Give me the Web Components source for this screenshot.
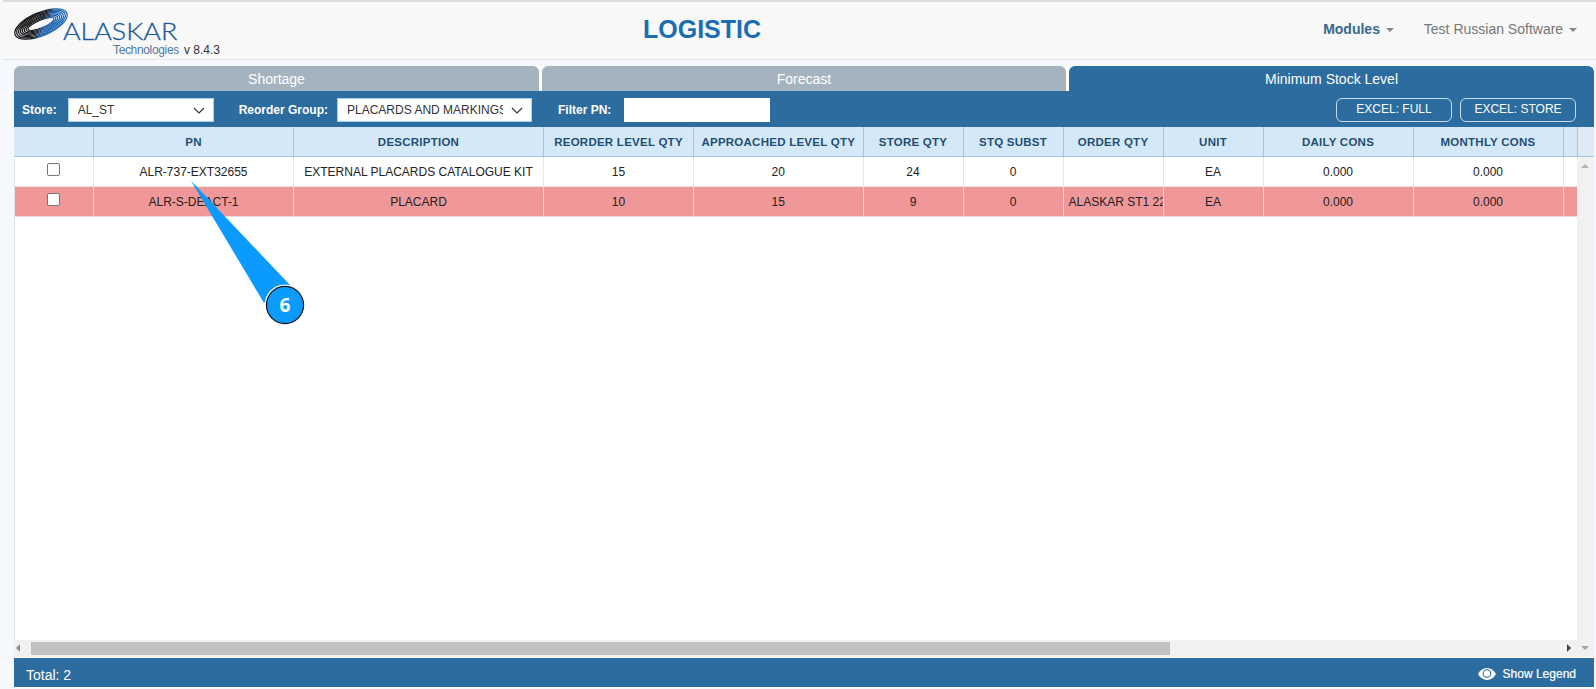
<!DOCTYPE html>
<html>
<head>
<meta charset="utf-8">
<title>Logistic</title>
<style>
  html, body { margin: 0; height: 689px; overflow: hidden; }
  body {
    background: #f5f9fe;
    font: 12px "Liberation Sans", Arial, sans-serif;
    display: flex;
    flex-direction: column;
    --cols: 80px 200px 250px 150px 169.5px 100px 100px 100px 100px 150px 150px 14px 16px;
  }
</style>
</head>
<body>
<top-nav></top-nav>
<stock-page>
  <tab-strip></tab-strip>
  <stock-toolbar></stock-toolbar>
  <stock-grid></stock-grid>
  <grid-footer></grid-footer>
</stock-page>
<callout-pin>6</callout-pin>

<script>
class AlaskarLogo extends HTMLElement {
  constructor() {
    super();
    this.attachShadow({ mode: 'open' });
    const rings = [0, 1, 2, 3, 4, 5, 6, 7].map((i) => {
      return `<ellipse cx="28" cy="17" rx="${28 - i * 2}" ry="${11.5 - i * 1.1}" transform="rotate(-23 28 17)"/>`;
    }).join('');
    this.shadowRoot.innerHTML = `
      <style>
        :host { display: block; position: relative; width: 225px; height: 57px; }
        svg { position: absolute; left: 13px; top: 5px; }
        .name {
          position: absolute; left: 63px; top: 17px;
          font: 300 24px/24px Lato, "Open Sans", sans-serif;
          color: #1a5a9c; transform: scaleX(1.12); transform-origin: left center;
          -webkit-text-stroke: 0.3px #1a5a9c;
        }
        .sub { position: absolute; left: 113px; top: 41px; font: 12px/14px "Liberation Sans", sans-serif; color: #4f7aa8; letter-spacing: -0.35px; }
        .ver { position: absolute; left: 184px; top: 41px; font: 12px/14px "Liberation Sans", sans-serif; color: #333; }
      </style>
      <svg width="60" height="40" viewBox="0 0 60 40">
        <defs>
          <linearGradient id="g" gradientUnits="userSpaceOnUse" x1="17" y1="5" x2="37" y2="29">
            <stop offset="0" stop-color="#0c0c0c"/>
            <stop offset="0.5" stop-color="#1a1e24"/>
            <stop offset="0.68" stop-color="#1c5da6"/>
            <stop offset="1" stop-color="#1863b4"/>
          </linearGradient>
        </defs>
        <g fill="none" stroke="url(#g)" stroke-width="1.2">
          ${rings}
        </g>
      </svg>
      <span class="name">ALASKAR</span>
      <span class="sub">Technologies</span>
      <span class="ver">v 8.4.3</span>
    `;
  }
}
customElements.define('alaskar-logo', AlaskarLogo);

class TopNav extends HTMLElement {
  constructor() {
    super();
    this.attachShadow({ mode: 'open' });
    this.shadowRoot.innerHTML = `
      <style>
        :host {
          display: flex; align-items: flex-start; flex: none;
          box-sizing: border-box; height: 60px; margin-left: 3px;
          background: #f8f8f8; border-bottom: 1px solid #e7e7e7;
          border-top: 2px solid #dcdcdc; margin-bottom: 6px;
        }
        alaskar-logo { margin-left: -3px; flex: none; }
        .title {
          flex: none; margin-left: 418px;
          font: bold 25px/54px "Liberation Sans", sans-serif; color: #1b6db3;
        }
        .menu { margin-left: auto; display: flex; padding-top: 17px; font-size: 14px; line-height: 20px; }
        .item { color: #777; padding-right: 30px; white-space: nowrap; }
        .item:last-child { padding-right: 19px; }
        .item.on { color: #34688f; font-weight: bold; }
        .caret {
          display: inline-block; width: 0; height: 0; margin-left: 2px; vertical-align: middle;
          border-top: 4px solid #888; border-left: 4px solid transparent; border-right: 4px solid transparent;
        }
      </style>
      <alaskar-logo></alaskar-logo>
      <div class="title">LOGISTIC</div>
      <div class="menu">
        <span class="item on">Modules <i class="caret"></i></span>
        <span class="item">Test Russian Software <i class="caret"></i></span>
      </div>
    `;
  }
}
customElements.define('top-nav', TopNav);

class StockPage extends HTMLElement {
  constructor() {
    super();
    this.attachShadow({ mode: 'open' });
    this.shadowRoot.innerHTML = `
      <style>
        :host {
          display: flex; flex-direction: column; flex: none;
          height: 621px; margin: 0 2px 0 14px; background: #fff;
        }
      </style>
      <slot></slot>
    `;
  }
}
customElements.define('stock-page', StockPage);

class TabStrip extends HTMLElement {
  constructor() {
    super();
    this.attachShadow({ mode: 'open' });
    const tabs = ['Shortage', 'Forecast', 'Minimum Stock Level'];
    this.shadowRoot.innerHTML = `
      <style>
        :host { display: grid; grid-template-columns: 525px 524px 1fr; column-gap: 3px; flex: none; height: 25px; background: #fff; }
        div {
          background: #a4b3be; color: #fff; text-align: center;
          font-size: 14px; line-height: 26px; border-radius: 6px 6px 0 0;
        }
        div.on { background: #2d6c9e; }
      </style>
      ${tabs.map((t, i) => `<div class="${i === 2 ? 'on' : ''}">${t}</div>`).join('')}
    `;
  }
}
customElements.define('tab-strip', TabStrip);

class StockToolbar extends HTMLElement {
  constructor() {
    super();
    this.attachShadow({ mode: 'open' });
    const chevron = '<svg width="12" height="7" viewBox="0 0 12 7"><path d="M1 1l5 5 5-5" fill="none" stroke="#333" stroke-width="1.2"/></svg>';
    this.shadowRoot.innerHTML = `
      <style>
        :host {
          display: flex; align-items: center; flex: none;
          height: 36px; box-sizing: border-box; background: #2d6c9e;
          color: #fff; padding: 2px 18px 0 8px;
          font-weight: bold;
        }
        label { white-space: nowrap; }
        .sel {
          display: flex; align-items: center; box-sizing: border-box; height: 24px;
          background: #fff; border: 1px solid #a9d0ee; color: #333; font-weight: normal;
          padding: 0 8px 0 9px;
        }
        .sel span { flex: 1; overflow: hidden; white-space: nowrap; }
        .sel svg { flex: none; margin-left: 8px; }
        .store { width: 146px; margin-left: 11px; }
        .group { width: 195px; margin-left: 9px; }
        .l2 { margin-left: 25px; }
        .l3 { margin-left: 26px; }
        .filter { width: 146px; height: 24px; margin-left: 13px; background: #fff; }
        .btns { margin-left: auto; display: flex; gap: 8px; }
        .btn {
          box-sizing: border-box; width: 116px; height: 24px; border: 1px solid #c5dced; border-radius: 6px;
          text-align: center; line-height: 21px; font-weight: normal; font-size: 12px;
        }
      </style>
      <label>Store:</label>
      <div class="sel store"><span>AL_ST</span>${chevron}</div>
      <label class="l2">Reorder Group:</label>
      <div class="sel group"><span>PLACARDS AND MARKINGS</span>${chevron}</div>
      <label class="l3">Filter PN:</label>
      <div class="filter"></div>
      <div class="btns">
        <div class="btn">EXCEL: FULL</div>
        <div class="btn">EXCEL: STORE</div>
      </div>
    `;
  }
}
customElements.define('stock-toolbar', StockToolbar);

class StockGrid extends HTMLElement {
  constructor() {
    super();
    this.attachShadow({ mode: 'open' });
    const heads = ['', 'PN', 'DESCRIPTION', 'REORDER LEVEL QTY', 'APPROACHED LEVEL QTY', 'STORE QTY', 'STQ SUBST', 'ORDER QTY', 'UNIT', 'DAILY CONS', 'MONTHLY CONS', '', ''];
    const rows = [
      { cls: '', cells: ['ALR-737-EXT32655', 'EXTERNAL PLACARDS CATALOGUE KIT', '15', '20', '24', '0', '', 'EA', '0.000', '0.000'] },
      { cls: 'low', cells: ['ALR-S-DEACT-1', 'PLACARD', '10', '15', '9', '0', 'ALASKAR ST1 22', 'EA', '0.000', '0.000'] }
    ];
    const rowHtml = rows.map((r) => `
      <div class="row ${r.cls}">
        <div class="c"><i class="check"></i></div>
        ${r.cells.map((c, i) => `<div class="c ${i === 6 ? 'clip' : ''}">${c}</div>`).join('')}
        <div class="c"></div>
      </div>`).join('');
    this.shadowRoot.innerHTML = `
      <style>
        :host { display: flex; flex-direction: column; flex: 1; min-height: 0; position: relative; border-left: 1px solid #dfe6ec; }
        .head, .row { display: grid; grid-template-columns: var(--cols); margin-left: -1px; }
        .head {
          flex: none; height: 30px; box-sizing: border-box; background: #d5e8f8;
          border-bottom: 1px solid #a9c5dd; color: #1f4f73; font-weight: bold;
          font-size: 11.5px; letter-spacing: 0.25px;
        }
        .head div { border-right: 1px solid #a9c5dd; text-align: center; line-height: 30px; white-space: nowrap; overflow: hidden; }
        .head div:last-child { border-right: 0; background: #dde9f3; }
        .body { flex: 1; min-height: 0; display: flex; }
        .rows { flex: 1; min-width: 0; overflow: hidden; }
        .row { height: 30px; box-sizing: border-box; border-bottom: 1px solid #e6e6e6; color: #222; }
        .row .c { border-right: 1px solid #e6e6e6; text-align: center; line-height: 30px; white-space: nowrap; overflow: hidden; }
        .row .c:last-child { border-right: 0; }
        .row .clip { text-align: left; padding-left: 5px; }
        .row.low { background: #ef9799; border-bottom-color: #f1d9da; }
        .row.low .c { border-right-color: #f8dcdc; }
        .check {
          display: block; box-sizing: border-box; width: 13px; height: 13px; margin: 6px 0 0 33px;
          background: #fff; border: 1px solid #767676; border-radius: 2px;
        }
        .vbar { flex: none; width: 17px; background: #f1f1f1; position: relative; }
        .up { position: absolute; left: 4px; top: 7px; border: 4px solid transparent; border-top: 0; border-bottom: 4px solid #b4b4b4; }
        .hbar { flex: none; height: 17px; background: #f1f1f1; position: relative; margin-left: -1px; margin-bottom: 1px; }
        .thumb { position: absolute; left: 17px; top: 2px; width: 1139px; height: 13px; background: #c1c1c1; }
        .tri { position: absolute; width: 0; height: 0; border: 4px solid transparent; }
        .left { left: 2px; top: 4px; border-left: 0; border-right-color: #8f8f8f; }
        .right { right: 23px; top: 4px; border-right: 0; border-left-color: #444; }
        .down { right: 5px; top: 6px; border-bottom: 0; border-top-color: #a5a5a5; }
      </style>
      <div class="head">${heads.map((h) => `<div>${h}</div>`).join('')}</div>
      <div class="body">
        <div class="rows">${rowHtml}</div>
        <div class="vbar"><i class="up"></i></div>
      </div>
      <div class="hbar">
        <i class="tri left"></i>
        <div class="thumb"></div>
        <i class="tri right"></i>
        <i class="tri down"></i>
      </div>
    `;
  }
}
customElements.define('stock-grid', StockGrid);

class GridFooter extends HTMLElement {
  constructor() {
    super();
    this.attachShadow({ mode: 'open' });
    this.shadowRoot.innerHTML = `
      <style>
        :host {
          display: flex; align-items: center; justify-content: space-between; flex: none;
          height: 29px; box-sizing: border-box; background: #2d6c9e; color: #fff; padding: 2px 18px 0 12px;
          font-size: 14px;
        }
        .total { margin-top: 2px; }
        .legend { display: flex; align-items: center; gap: 7px; font-size: 12px; }
        .legend b { font-weight: normal; -webkit-text-stroke: 0.2px #fff; }
      </style>
      <span class="total">Total: 2</span>
      <span class="legend">
        <svg width="18" height="12" viewBox="0 0 18 12">
          <path fill="#fff" d="M9 0C5 0 2 2.400 0 6c2 3.600 5 6 9 6s7-2.400 9-6c-2-3.600-5-6-9-6z"/>
          <circle cx="9" cy="5.500" r="4.300" fill="#2d6c9e"/>
          <circle cx="9" cy="5.500" r="3.200" fill="#fff"/>
        </svg>
        <b>Show Legend</b>
      </span>
    `;
  }
}
customElements.define('grid-footer', GridFooter);

class CalloutPin extends HTMLElement {
  constructor() {
    super();
    this.attachShadow({ mode: 'open' });
    this.shadowRoot.innerHTML = `
      <style>
        :host { display: block; position: absolute; left: 185px; top: 175px; width: 125px; height: 155px; }
        svg { position: absolute; left: 0; top: 0; }
        span {
          position: absolute; left: 80px; top: 115px; width: 40px; text-align: center;
          font: bold 19px/30px "Noto Sans", "Open Sans", sans-serif; color: #fff;
        }
      </style>
      <svg width="125" height="155" viewBox="0 0 125 155">
        <path d="M6 5.700L105 110L79 128Z" fill="#0b9bff"/>
        <circle cx="100" cy="130" r="20.500" fill="#fff"/>
        <circle cx="100" cy="130" r="19.200" fill="#111"/>
        <circle cx="100" cy="130" r="18" fill="#0b9bff"/>
      </svg>
      <span><slot></slot></span>
    `;
  }
}
customElements.define('callout-pin', CalloutPin);
</script>
</body>
</html>
